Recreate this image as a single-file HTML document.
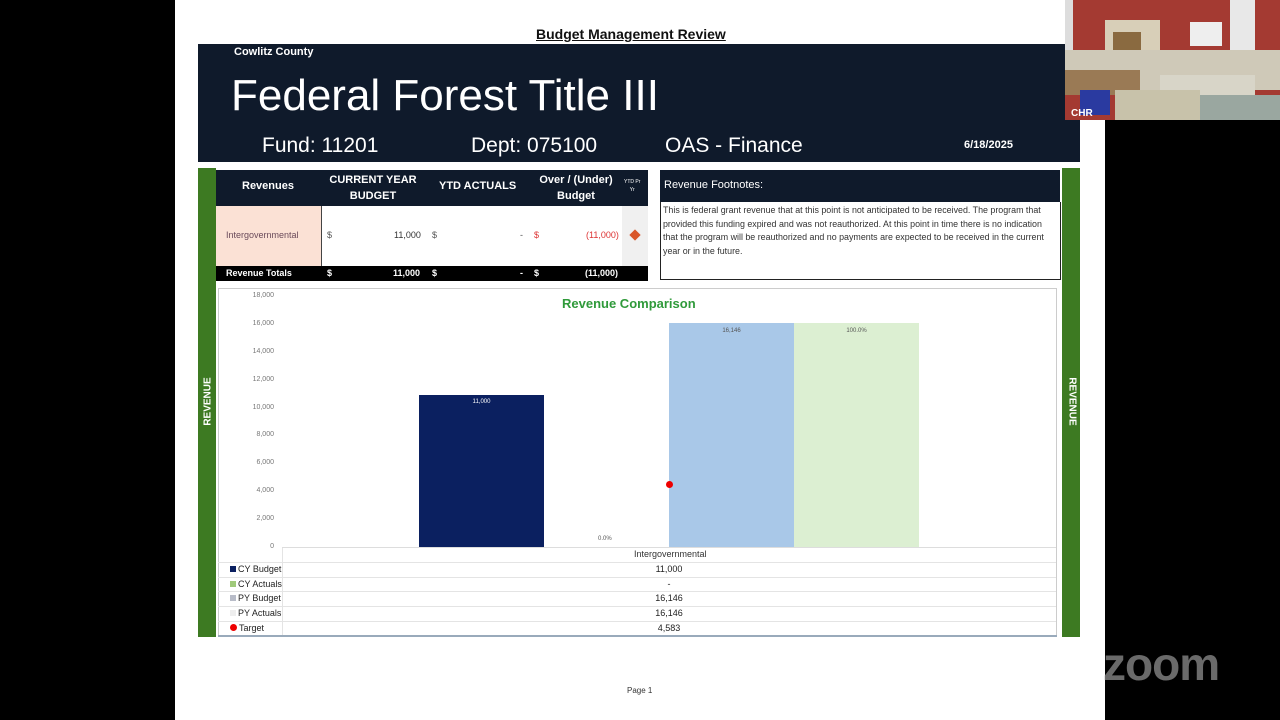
<!DOCTYPE html>
<html><head><meta charset="utf-8"><style>
*{margin:0;padding:0;box-sizing:border-box}
body{width:1280px;height:720px;background:#000;position:relative;overflow:hidden;font-family:"Liberation Sans",sans-serif}
.a{position:absolute}
.t{position:absolute;white-space:nowrap}
.yl{position:absolute;left:240px;width:34px;text-align:right;font-size:7px;color:#777}
.row{position:absolute;left:218px;width:838px;height:14.6px;border-top:1px solid #e4e4e4;font-size:9px;color:#222}
.row span{position:absolute;top:1px}
.row .v{left:0;width:902px;text-align:center}
.sw{display:inline-block;width:6px;height:6px;margin-right:2px}
</style></head><body>
<div class="a" style="left:175px;top:0;width:930px;height:720px;background:#fff"></div>
<div class="t" style="left:536px;top:26px;font-size:14px;font-weight:bold;text-decoration:underline;color:#111">Budget Management Review</div>
<div class="a" style="left:198px;top:44px;width:882px;height:118px;background:#0f1a2b"></div>
<div class="t" style="left:234px;top:46px;font-size:11px;font-weight:bold;color:#fff">Cowlitz County</div>
<div class="t" style="left:231px;top:71px;font-size:44px;color:#fff">Federal Forest Title III</div>
<div class="t" style="left:262px;top:134px;font-size:21px;color:#fff">Fund: 11201</div>
<div class="t" style="left:471px;top:134px;font-size:21px;color:#fff">Dept: 075100</div>
<div class="t" style="left:665px;top:134px;font-size:21px;color:#fff">OAS - Finance</div>
<div class="t" style="left:964px;top:139px;font-size:11px;font-weight:bold;color:#fff">6/18/2025</div>
<div class="a" style="left:198px;top:168px;width:18px;height:469px;background:#3d7a22"></div>
<div class="a" style="left:1062px;top:168px;width:18px;height:469px;background:#3d7a22"></div>
<div class="t" style="left:184px;top:396px;transform:rotate(-90deg);font-size:10px;font-weight:bold;color:#fff">REVENUE</div>
<div class="t" style="left:1048px;top:396px;transform:rotate(90deg);font-size:10px;font-weight:bold;color:#fff">REVENUE</div>
<div class="a" style="left:216px;top:170px;width:432px;height:36px;background:#0f1a2b"></div>
<div class="t" style="left:242px;top:180px;font-size:11px;font-weight:bold;color:#fff">Revenues</div>
<div class="t" style="left:325px;top:172px;width:96px;text-align:center;font-size:11px;font-weight:bold;color:#fff;line-height:16px">CURRENT YEAR<br>BUDGET</div>
<div class="t" style="left:439px;top:180px;font-size:11px;font-weight:bold;color:#fff">YTD ACTUALS</div>
<div class="t" style="left:530px;top:172px;width:92px;text-align:center;font-size:11px;font-weight:bold;color:#fff;line-height:16px">Over / (Under)<br>Budget</div>
<div class="t" style="left:624px;top:178px;font-size:5px;color:#fff;line-height:8px;text-align:center">YTD Pr<br>Yr</div>
<div class="a" style="left:216px;top:206px;width:105px;height:60px;background:#fbe1d5"></div>
<div class="a" style="left:321px;top:206px;width:1px;height:60px;background:#444"></div>
<div class="a" style="left:622px;top:206px;width:26px;height:60px;background:#f0f0f0"></div>
<div class="t" style="left:226px;top:230px;font-size:9px;color:#6a4a5a">Intergovernmental</div>
<div class="t" style="left:327px;top:230px;font-size:9px;color:#555">$</div>
<div class="t" style="left:394px;top:230px;font-size:9px;color:#333">11,000</div>
<div class="t" style="left:432px;top:230px;font-size:9px;color:#555">$</div>
<div class="t" style="left:520px;top:230px;font-size:9px;color:#555">-</div>
<div class="t" style="left:534px;top:230px;font-size:9px;color:#d33">$</div>
<div class="t" style="left:586px;top:230px;font-size:9px;color:#d33">(11,000)</div>
<div class="a" style="left:631px;top:231px;width:8px;height:8px;background:#d9572a;transform:rotate(45deg)"></div>
<div class="a" style="left:216px;top:266px;width:432px;height:15px;background:#000"></div>
<div class="t" style="left:226px;top:268px;font-size:9px;font-weight:bold;color:#fff">Revenue Totals</div>
<div class="t" style="left:327px;top:268px;font-size:9px;font-weight:bold;color:#fff">$</div>
<div class="t" style="left:393px;top:268px;font-size:9px;font-weight:bold;color:#fff">11,000</div>
<div class="t" style="left:432px;top:268px;font-size:9px;font-weight:bold;color:#fff">$</div>
<div class="t" style="left:520px;top:268px;font-size:9px;font-weight:bold;color:#fff">-</div>
<div class="t" style="left:534px;top:268px;font-size:9px;font-weight:bold;color:#fff">$</div>
<div class="t" style="left:585px;top:268px;font-size:9px;font-weight:bold;color:#fff">(11,000)</div>
<div class="a" style="left:660px;top:170px;width:400px;height:32px;background:#0f1a2b"></div>
<div class="t" style="left:664px;top:179px;font-size:11px;color:#fff">Revenue Footnotes:</div>
<div class="a" style="left:660px;top:202px;width:401px;height:78px;border:1px solid #222;border-top:none;background:#fff"></div>
<div class="a" style="left:663px;top:204px;width:395px;font-size:8.9px;line-height:13.5px;color:#333">This is federal grant revenue that at this point is not anticipated to be received. The program that provided this funding expired and was not reauthorized. At this point in time there is no indication that the program will be reauthorized and no payments are expected to be received in the current year or in the future.</div>
<div class="a" style="left:218px;top:288px;width:839px;height:348px;border:1px solid #ccc;background:#fff"></div>
<div class="t" style="left:562px;top:296px;font-size:13px;font-weight:bold;color:#2f9a3a">Revenue Comparison</div>
<div class="yl" style="top:292px">18,000</div>
<div class="yl" style="top:320px">16,000</div>
<div class="yl" style="top:348px">14,000</div>
<div class="yl" style="top:376px">12,000</div>
<div class="yl" style="top:404px">10,000</div>
<div class="yl" style="top:431px">8,000</div>
<div class="yl" style="top:459px">6,000</div>
<div class="yl" style="top:487px">4,000</div>
<div class="yl" style="top:515px">2,000</div>
<div class="yl" style="top:543px">0</div>
<div class="a" style="left:282px;top:547px;width:774px;height:1px;background:#ddd"></div>
<div class="a" style="left:419px;top:395px;width:125px;height:152px;background:#0b2060"></div>
<div class="t" style="left:419px;top:399px;width:125px;text-align:center;font-size:6px;color:#fff">11,000</div>
<div class="t" style="left:598px;top:536px;font-size:6px;color:#555">0.0%</div>
<div class="a" style="left:669px;top:323px;width:125px;height:224px;background:#a9c8e8"></div>
<div class="t" style="left:669px;top:328px;width:125px;text-align:center;font-size:6px;color:#555">16,146</div>
<div class="a" style="left:794px;top:323px;width:125px;height:224px;background:#dcefd2"></div>
<div class="t" style="left:794px;top:328px;width:125px;text-align:center;font-size:6px;color:#555">100.0%</div>
<div class="a" style="left:666px;top:481px;width:7px;height:7px;border-radius:50%;background:#e00"></div>
<div class="a" style="left:282px;top:548px;width:1px;height:88px;background:#e4e4e4"></div>
<div class="t" style="left:634px;top:549px;font-size:9px;color:#333">Intergovernmental</div>
<div class="row" style="top:562px"><span style="left:12px"><i class="sw" style="background:#0b2060"></i>CY Budget</span><span class="v">11,000</span></div>
<div class="row" style="top:577px"><span style="left:12px"><i class="sw" style="background:#9fc97a"></i>CY Actuals</span><span class="v">-</span></div>
<div class="row" style="top:591px"><span style="left:12px"><i class="sw" style="background:#b8bcc8"></i>PY Budget</span><span class="v">16,146</span></div>
<div class="row" style="top:606px"><span style="left:12px"><i class="sw" style="background:#eee"></i>PY Actuals</span><span class="v">16,146</span></div>
<div class="row" style="top:621px"><span style="left:12px"><i class="sw" style="background:#e00;border-radius:50%;width:7px;height:7px"></i>Target</span><span class="v">4,583</span></div>
<div class="a" style="left:218px;top:635px;width:839px;height:2px;background:#9ab"></div>
<div class="t" style="left:627px;top:686px;font-size:8px;color:#333">Page 1</div>
<div class="t" style="left:1103px;top:637px;font-size:46px;font-weight:bold;color:#6a6a6a;letter-spacing:-1px">zoom</div>
<svg class="a" style="left:1065px;top:0" width="215" height="120" viewBox="0 0 215 120">
<rect width="215" height="120" fill="#a43a32"/>
<rect x="0" y="0" width="8" height="60" fill="#ddd"/>
<rect x="165" y="0" width="25" height="50" fill="#e8e8e8"/>
<rect x="40" y="20" width="55" height="55" fill="#d8cfb8"/>
<rect x="48" y="32" width="28" height="45" fill="#8a6a40"/>
<rect x="125" y="22" width="32" height="24" fill="#eee"/>
<rect x="0" y="50" width="215" height="40" fill="#cfc9b8"/>
<rect x="0" y="70" width="75" height="25" fill="#9a7a55"/>
<rect x="95" y="75" width="95" height="25" fill="#d8d5c8"/>
<rect x="50" y="90" width="85" height="30" fill="#c8c2aa"/>
<rect x="135" y="95" width="80" height="25" fill="#9aa7a0"/>
<rect x="15" y="90" width="30" height="25" fill="#2a3aa0"/>
<text x="6" y="116" font-family="Liberation Sans" font-size="10" font-weight="bold" fill="#fff">CHR</text>
</svg>
</body></html>
